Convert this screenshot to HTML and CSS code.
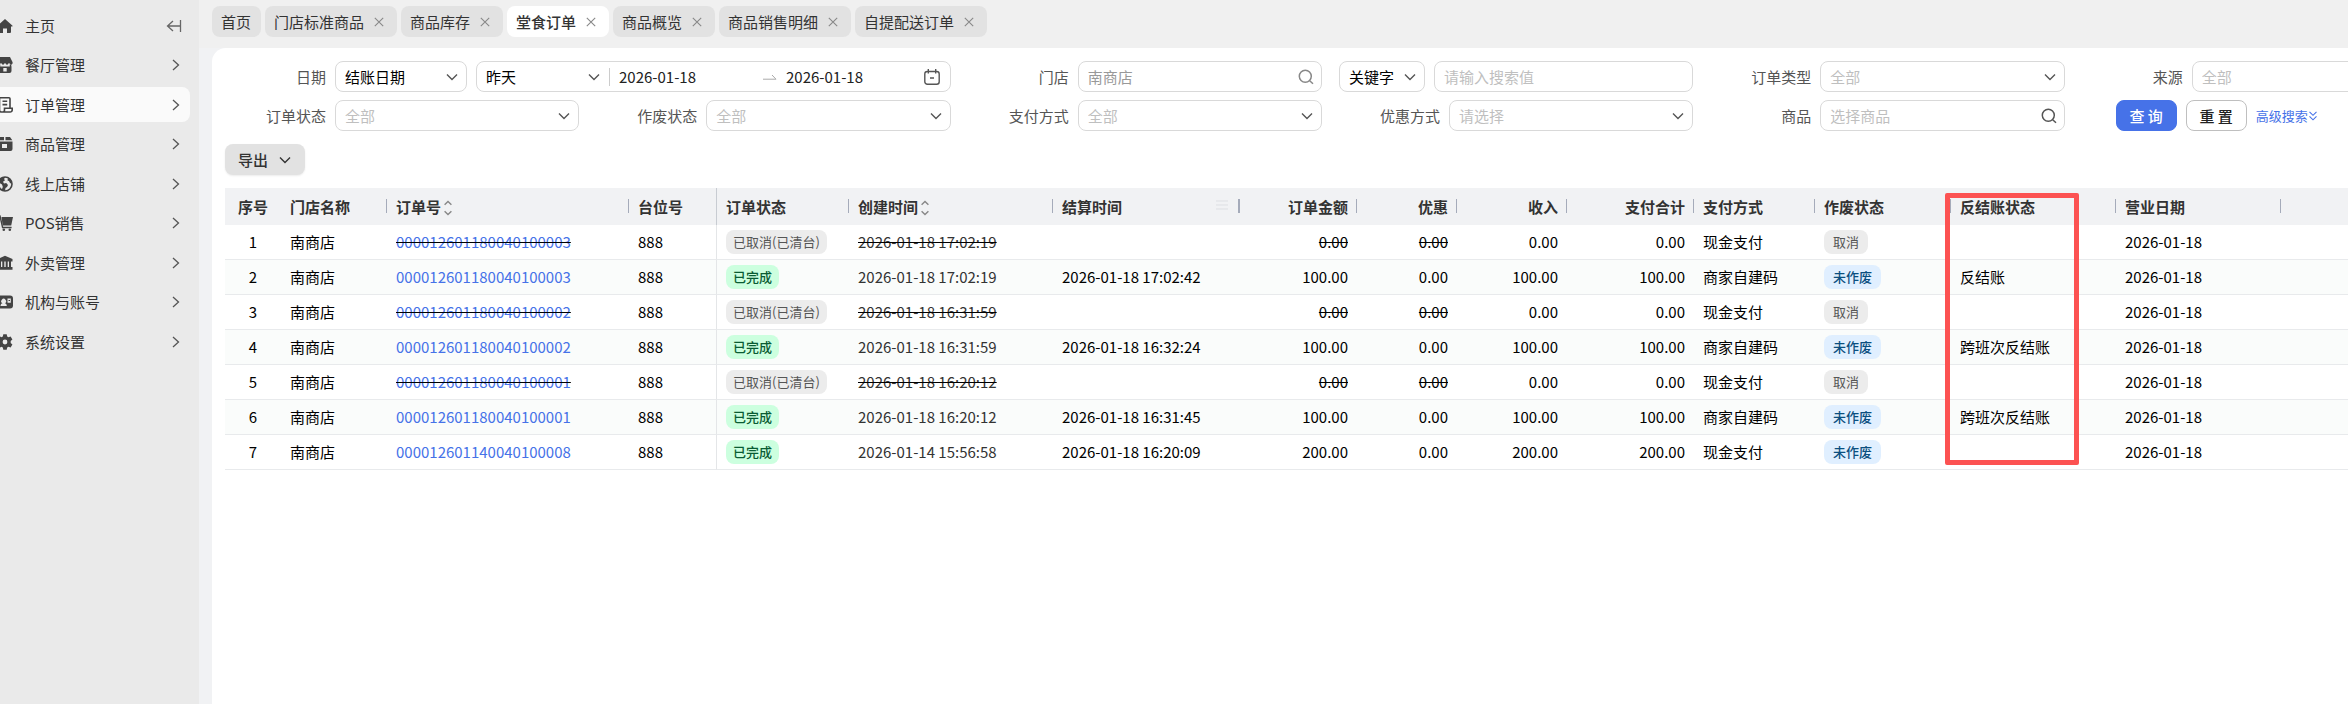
FILE: index.html
```html
<!DOCTYPE html>
<html lang="zh-CN">
<head>
    <meta charset="UTF-8">
    <meta name="viewport" content="width=device-width, initial-scale=1.0">
    <title>堂食订单</title>
    <link rel="stylesheet" href="styles.css">
</head>
<body>
    <!-- Icon sprite -->
    <svg class="sprite" aria-hidden="true">
        <symbol id="i-right" viewBox="0 0 12 12"><path d="M3 1l5.500 5L3 11" fill="none" stroke="currentColor" stroke-width="1.300"/></symbol>
        <symbol id="i-down" viewBox="0 0 12 12"><path d="M1 3.500l5 5 5-5" fill="none" stroke="currentColor" stroke-width="1.400"/></symbol>
        <symbol id="i-close" viewBox="0 0 10 10"><path d="M.8.8l8.400 8.400M9.200.8L.8 9.200" fill="none" stroke="currentColor" stroke-width="1.100"/></symbol>
        <symbol id="i-search" viewBox="0 0 16 16"><circle cx="7.300" cy="7.300" r="6" fill="none" stroke="currentColor" stroke-width="1.500"/><path d="M11.700 11.700l3.300 3" fill="none" stroke="currentColor" stroke-width="1.500"/></symbol>
        <symbol id="i-sort" viewBox="0 0 8 16"><path d="M.6 4.800L4 1.400l3.400 3.400M.6 11.200L4 14.600l3.400-3.400" fill="none" stroke="currentColor" stroke-width="1.400"/></symbol>
    </svg>

    <div class="layout">
        <aside class="sidebar">
            <nav class="menu">
                <a href="#" class="menu-item">
                    <svg class="menu-icon" viewBox="0 0 16 16"><path d="M8 1L15.300 7.400c.5.5.2 1.100-.4 1.100H14V14a1 1 0 0 1-1 1h-3v-4.500H6V15H3a1 1 0 0 1-1-1V8.500H1.100c-.6 0-.9-.6-.4-1.100z" fill="currentColor"/></svg>
                    <span>主页</span>
                    <svg class="collapse" viewBox="0 0 16 16"><path d="M7 3L1.500 8 7 13M1.500 8H14M14.500 2v12" fill="none" stroke="currentColor" stroke-width="1.300"/></svg>
                </a>
                <a href="#" class="menu-item">
                    <svg class="menu-icon" viewBox="0 0 16 16"><path d="M3 0h10l2.600 5.200v1.300L14 8l-2-2-2 2-2-2-2 2-2-2-2 2L.4 6.500V5.200z" fill="currentColor"/><path d="M1.500 9.500h13V14a2 2 0 0 1-2 2h-9a2 2 0 0 1-2-2zM6.300 11v3.500h3.400V11z" fill="currentColor" fill-rule="evenodd"/><path d="M2.500 7.500V10M13.500 7.500V10" stroke="currentColor" stroke-width="1.500"/></svg>
                    <span>餐厅管理</span>
                    <svg class="arrow"><use href="#i-right"/></svg>
                </a>
                <a href="#" class="menu-item active">
                    <svg class="menu-icon" viewBox="0 0 16 16"><path d="M13 11V1.800a1 1 0 0 0-1-1H2.500V13a2 2 0 0 0 2 2H13a2 2 0 0 0 2.200-2v-1.800H7.500V13c0 1-.7 2-1.700 2M5.500 4.300h4.700M5.500 7.600h4.700" fill="none" stroke="currentColor" stroke-width="1.600"/></svg>
                    <span>订单管理</span>
                    <svg class="arrow"><use href="#i-right"/></svg>
                </a>
                <a href="#" class="menu-item">
                    <svg class="menu-icon" viewBox="0 0 16 16"><path d="M3 1h4v3.300H1zM8.500 1H13l2.300 3.300H8.500zM.5 5.500h15V13a2 2 0 0 1-2 2h-11a2 2 0 0 1-2-2zM5 8v4h5V8z" fill="currentColor" fill-rule="evenodd"/></svg>
                    <span>商品管理</span>
                    <svg class="arrow"><use href="#i-right"/></svg>
                </a>
                <a href="#" class="menu-item">
                    <svg class="menu-icon" viewBox="0 0 16 16"><circle cx="8" cy="8" r="7" fill="none" stroke="currentColor" stroke-width="1.600"/><path d="M1 6C2 2.500 5 .8 8.500 1L7 3l1 1.200-2 1.600 1 1.700 2.200-.5L11 9l-1 2-1.500 1-.5 3C3.500 15 .5 11 1 6zM11 1.500c2.500 1.200 4 3.500 4 6.500L13 7l-1-2-1.500-.5z" fill="currentColor"/><path d="M2.500 7l2.500 1.600.8 2.400-.8 2C3 11.800 2 9.500 2.500 7z" fill="#eaeaea"/></svg>
                    <span>线上店铺</span>
                    <svg class="arrow"><use href="#i-right"/></svg>
                </a>
                <a href="#" class="menu-item">
                    <svg class="menu-icon" viewBox="0 0 16 16"><path d="M4.500 2H16l-1.800 8.500H5.700z" fill="currentColor"/><path d="M0 1h3l2.600 11.500h9" fill="none" stroke="currentColor" stroke-width="1.400"/><circle cx="6.800" cy="14.700" r="1.300" fill="currentColor"/><circle cx="12.800" cy="14.700" r="1.300" fill="currentColor"/></svg>
                    <span>POS销售</span>
                    <svg class="arrow"><use href="#i-right"/></svg>
                </a>
                <a href="#" class="menu-item">
                    <svg class="menu-icon" viewBox="0 0 16 16"><path d="M8 .8L15.500 4v2.500H.5V4zM2 6.500h2v5.500H2zM5.300 6.500h2v5.500h-2zM8.700 6.500h2v5.500h-2zM12 6.500h2v5.500h-2zM.5 12h15v2.800H.5z" fill="currentColor"/></svg>
                    <span>外卖管理</span>
                    <svg class="arrow"><use href="#i-right"/></svg>
                </a>
                <a href="#" class="menu-item">
                    <svg class="menu-icon" viewBox="0 0 16 16"><rect x="0" y="1.500" width="16" height="13" rx="3" fill="currentColor"/><path d="M3.500 12c0-1.600.9-2.400 2-2.700a2.400 2.400 0 1 1 2.300 0c1.200.3 2 1.100 2 2.700zM10.500 4.500h3.300v4.300h-3.300z" fill="#eaeaea"/><path d="M11.500 6.500h1.500" stroke="currentColor"/></svg>
                    <span>机构与账号</span>
                    <svg class="arrow"><use href="#i-right"/></svg>
                </a>
                <a href="#" class="menu-item">
                    <svg class="menu-icon" viewBox="0 0 16 16"><path d="M6.300.3h3.400l.5 2.200 1.200.7 2.200-.8 1.800 3-1.700 1.500v2.200l1.700 1.500-1.800 3-2.200-.8-1.200.7-.5 2.200H6.300l-.5-2.200-1.200-.7-2.200.8-1.800-3 1.700-1.500V6.900L.6 5.400l1.800-3 2.200.8 1.200-.7zM8 5.600a2.400 2.400 0 1 0 0 4.800 2.400 2.400 0 0 0 0-4.800z" fill="currentColor" fill-rule="evenodd"/></svg>
                    <span>系统设置</span>
                    <svg class="arrow"><use href="#i-right"/></svg>
                </a>
            </nav>
        </aside>

        <main class="main">
            <div class="tabs">
                <div class="tab"><a href="#">首页</a></div>
                <div class="tab"><a href="#">门店标准商品</a><button class="close" aria-label="关闭"><svg><use href="#i-close"/></svg></button></div>
                <div class="tab"><a href="#">商品库存</a><button class="close" aria-label="关闭"><svg><use href="#i-close"/></svg></button></div>
                <div class="tab active"><a href="#">堂食订单</a><button class="close" aria-label="关闭"><svg><use href="#i-close"/></svg></button></div>
                <div class="tab"><a href="#">商品概览</a><button class="close" aria-label="关闭"><svg><use href="#i-close"/></svg></button></div>
                <div class="tab"><a href="#">商品销售明细</a><button class="close" aria-label="关闭"><svg><use href="#i-close"/></svg></button></div>
                <div class="tab"><a href="#">自提配送订单</a><button class="close" aria-label="关闭"><svg><use href="#i-close"/></svg></button></div>
            </div>

            <section class="panel">
                <form class="filters">
                    <div class="field field-wide">
                        <label for="dateType">日期</label>
                        <div class="control date-type">
                            <select id="dateType"><option>结账日期</option></select>
                            <svg class="icon-down"><use href="#i-down"/></svg>
                        </div>
                        <div class="control date-range">
                            <div class="preset">
                                <select aria-label="日期范围"><option>昨天</option></select>
                                <svg class="icon-down"><use href="#i-down"/></svg>
                            </div>
                            <input type="text" class="start" value="2026-01-18" aria-label="开始日期">
                            <svg class="range-arrow" viewBox="0 0 14 6"><path d="M0 5.200h13L9 1" fill="none" stroke="currentColor"/></svg>
                            <input type="text" value="2026-01-18" aria-label="结束日期">
                            <svg class="calendar" viewBox="0 0 16 16"><rect x=".8" y="2.500" width="14.400" height="12.700" rx="2.500" fill="none" stroke="currentColor" stroke-width="1.400"/><path d="M4.300 0v4.500M11.700 0v4.500M6 9h4" stroke="currentColor" stroke-width="1.400"/></svg>
                        </div>
                    </div>
                    <div class="field">
                        <label for="store">门店</label>
                        <div class="control">
                            <input type="text" id="store" class="dim" value="南商店">
                            <svg class="icon-search light"><use href="#i-search"/></svg>
                        </div>
                    </div>
                    <div class="field field-keyword">
                        <div class="control keyword-type">
                            <select aria-label="搜索类型"><option>关键字</option></select>
                            <svg class="icon-down"><use href="#i-down"/></svg>
                        </div>
                        <div class="control">
                            <input type="text" placeholder="请输入搜索值" aria-label="搜索值">
                        </div>
                    </div>
                    <div class="field">
                        <label for="orderType">订单类型</label>
                        <div class="control">
                            <select id="orderType" class="empty"><option>全部</option></select>
                            <svg class="icon-down"><use href="#i-down"/></svg>
                        </div>
                    </div>
                    <div class="field">
                        <label for="source">来源</label>
                        <div class="control">
                            <select id="source" class="empty"><option>全部</option></select>
                            <svg class="icon-down"><use href="#i-down"/></svg>
                        </div>
                    </div>
                    <div class="field">
                        <label for="orderStatus">订单状态</label>
                        <div class="control">
                            <select id="orderStatus" class="empty"><option>全部</option></select>
                            <svg class="icon-down"><use href="#i-down"/></svg>
                        </div>
                    </div>
                    <div class="field">
                        <label for="voidStatus">作废状态</label>
                        <div class="control">
                            <select id="voidStatus" class="empty"><option>全部</option></select>
                            <svg class="icon-down"><use href="#i-down"/></svg>
                        </div>
                    </div>
                    <div class="field">
                        <label for="payMethod">支付方式</label>
                        <div class="control">
                            <select id="payMethod" class="empty"><option>全部</option></select>
                            <svg class="icon-down"><use href="#i-down"/></svg>
                        </div>
                    </div>
                    <div class="field">
                        <label for="discount">优惠方式</label>
                        <div class="control">
                            <select id="discount" class="empty"><option>请选择</option></select>
                            <svg class="icon-down"><use href="#i-down"/></svg>
                        </div>
                    </div>
                    <div class="field">
                        <label for="product">商品</label>
                        <div class="control">
                            <input type="text" id="product" placeholder="选择商品">
                            <svg class="icon-search"><use href="#i-search"/></svg>
                        </div>
                    </div>
                    <div class="actions">
                        <button type="button" class="btn btn-primary">查 询</button>
                        <button type="button" class="btn">重 置</button>
                        <a href="#" class="advanced">高级搜索<svg viewBox="0 0 8 10"><path d="M.5.800L4 4.300 7.500.800M.5 5.300L4 8.800l3.500-3.500" fill="none" stroke="currentColor" stroke-width="1.100"/></svg></a>
                    </div>
                </form>

                <button class="export">导出<svg><use href="#i-down"/></svg></button>

                <table class="orders">
                    <colgroup>
                        <col class="w-index"><col class="w-store"><col class="w-order"><col class="w-seat"><col class="w-status"><col class="w-created"><col class="w-settled"><col class="w-amount"><col class="w-discount"><col class="w-income"><col class="w-total"><col class="w-pay"><col class="w-void"><col class="w-reverse"><col class="w-day"><col>
                    </colgroup>
                    <thead>
                        <tr>
                            <th class="center">序号</th>
                            <th class="sep">门店名称</th>
                            <th class="sep">订单号<svg class="sort"><use href="#i-sort"/></svg></th>
                            <th class="frozen">台位号</th>
                            <th class="sep">订单状态</th>
                            <th class="sep">创建时间<svg class="sort"><use href="#i-sort"/></svg></th>
                            <th class="sep hover">结算时间<svg class="col-menu" viewBox="0 0 12 10"><path d="M0 1h12M0 5h12M0 9h12" stroke="currentColor"/></svg></th>
                            <th class="sep num">订单金额</th>
                            <th class="sep num">优惠</th>
                            <th class="sep num">收入</th>
                            <th class="sep num">支付合计</th>
                            <th class="sep">支付方式</th>
                            <th class="sep">作废状态</th>
                            <th class="sep marked">反结账状态<span class="mark"></span></th>
                            <th class="sep">营业日期</th>
                            <th></th>
                        </tr>
                    </thead>
                    <tbody>
                        <tr>
                            <td class="center">1</td><td>南商店</td><td class="strike"><a href="#">000012601180040100003</a></td><td class="frozen">888</td>
                            <td><span class="badge badge-gray">已取消(已清台)</span></td><td class="strike"><span class="time">2026-01-18 17:02:19</span></td><td></td>
                            <td class="num strike">0.00</td><td class="num strike">0.00</td><td class="num">0.00</td><td class="num">0.00</td>
                            <td>现金支付</td><td><span class="badge tag badge-gray">取消</span></td><td></td><td>2026-01-18</td><td></td>
                        </tr>
                        <tr>
                            <td class="center">2</td><td>南商店</td><td><a href="#">000012601180040100003</a></td><td class="frozen">888</td>
                            <td><span class="badge badge-green">已完成</span></td><td><span class="time">2026-01-18 17:02:19</span></td><td>2026-01-18 17:02:42</td>
                            <td class="num">100.00</td><td class="num">0.00</td><td class="num">100.00</td><td class="num">100.00</td>
                            <td>商家自建码</td><td><span class="badge tag badge-blue">未作废</span></td><td>反结账</td><td>2026-01-18</td><td></td>
                        </tr>
                        <tr>
                            <td class="center">3</td><td>南商店</td><td class="strike"><a href="#">000012601180040100002</a></td><td class="frozen">888</td>
                            <td><span class="badge badge-gray">已取消(已清台)</span></td><td class="strike"><span class="time">2026-01-18 16:31:59</span></td><td></td>
                            <td class="num strike">0.00</td><td class="num strike">0.00</td><td class="num">0.00</td><td class="num">0.00</td>
                            <td>现金支付</td><td><span class="badge tag badge-gray">取消</span></td><td></td><td>2026-01-18</td><td></td>
                        </tr>
                        <tr>
                            <td class="center">4</td><td>南商店</td><td><a href="#">000012601180040100002</a></td><td class="frozen">888</td>
                            <td><span class="badge badge-green">已完成</span></td><td><span class="time">2026-01-18 16:31:59</span></td><td>2026-01-18 16:32:24</td>
                            <td class="num">100.00</td><td class="num">0.00</td><td class="num">100.00</td><td class="num">100.00</td>
                            <td>商家自建码</td><td><span class="badge tag badge-blue">未作废</span></td><td>跨班次反结账</td><td>2026-01-18</td><td></td>
                        </tr>
                        <tr>
                            <td class="center">5</td><td>南商店</td><td class="strike"><a href="#">000012601180040100001</a></td><td class="frozen">888</td>
                            <td><span class="badge badge-gray">已取消(已清台)</span></td><td class="strike"><span class="time">2026-01-18 16:20:12</span></td><td></td>
                            <td class="num strike">0.00</td><td class="num strike">0.00</td><td class="num">0.00</td><td class="num">0.00</td>
                            <td>现金支付</td><td><span class="badge tag badge-gray">取消</span></td><td></td><td>2026-01-18</td><td></td>
                        </tr>
                        <tr>
                            <td class="center">6</td><td>南商店</td><td><a href="#">000012601180040100001</a></td><td class="frozen">888</td>
                            <td><span class="badge badge-green">已完成</span></td><td><span class="time">2026-01-18 16:20:12</span></td><td>2026-01-18 16:31:45</td>
                            <td class="num">100.00</td><td class="num">0.00</td><td class="num">100.00</td><td class="num">100.00</td>
                            <td>商家自建码</td><td><span class="badge tag badge-blue">未作废</span></td><td>跨班次反结账</td><td>2026-01-18</td><td></td>
                        </tr>
                        <tr>
                            <td class="center">7</td><td>南商店</td><td><a href="#">000012601140040100008</a></td><td class="frozen">888</td>
                            <td><span class="badge badge-green">已完成</span></td><td><span class="time">2026-01-14 15:56:58</span></td><td>2026-01-18 16:20:09</td>
                            <td class="num">200.00</td><td class="num">0.00</td><td class="num">200.00</td><td class="num">200.00</td>
                            <td>现金支付</td><td><span class="badge tag badge-blue">未作废</span></td><td></td><td>2026-01-18</td><td></td>
                        </tr>
                    </tbody>
                </table>
            </section>
        </main>
    </div>
</body>
</html>
```

FILE: styles.css
```css
/* Reset and Base Styles */
* {
    margin: 0;
    padding: 0;
    box-sizing: border-box;
}

body {
    font-family: "Noto Sans CJK SC", "Noto Sans", sans-serif;
    font-size: 15px;
    line-height: 22px;
    color: #000;
    background: #f1f2f4;
    overflow: hidden;
}

a {
    color: inherit;
    text-decoration: none;
}

button,
input,
select {
    font: inherit;
    color: inherit;
    border: none;
    background: none;
    outline: none;
}

button {
    cursor: pointer;
}

.sprite {
    display: none;
}

.layout {
    display: flex;
    min-height: 100vh;
}

/* Sidebar */
.sidebar {
    flex: 0 0 199px;
    padding-top: 8px;
    background: #eaeaea;
}

.menu {
    display: flex;
    flex-direction: column;
    justify-content: space-between;
    height: 351px;
}

.menu-item {
    display: flex;
    align-items: center;
    height: 35px;
    margin-right: 9px;
    padding-right: 8px;
    border-radius: 0 8px 8px 0;
    color: #333;
}

.menu-item.active {
    background: #fafafa;
}

.menu-item span {
    flex: 1;
}

.menu-icon {
    width: 16px;
    height: 16px;
    margin-left: -3px;
    margin-right: 12px;
    color: #444;
}

.arrow {
    width: 12px;
    height: 12px;
    color: #555;
}

.collapse {
    width: 16px;
    height: 16px;
    color: #666;
}

/* Tabs */
.main {
    flex: 1;
    min-width: 0;
    display: flex;
    flex-direction: column;
}

.tabs {
    display: flex;
    gap: 4px;
    height: 48px;
    padding: 6px 13px 11px;
    background: #f0f0f0;
}

.tab {
    display: flex;
    align-items: center;
    gap: 10px;
    padding: 0 10px 0 9px;
    border-radius: 8px;
    background: #e2e2e2;
    color: #333;
}

.tab.active {
    background: #fff;
    font-weight: 500;
}

.close {
    display: flex;
    margin-right: 3px;
    color: #888;
}

.close svg {
    width: 10px;
    height: 10px;
}

/* Panel */
.panel {
    flex: 1;
    margin-left: 13px;
    padding: 13px 0 0 13px;
    border-radius: 14px 0 0 0;
    background: #fff;
    overflow: hidden;
}

.filters {
    display: grid;
    grid-template-columns: repeat(6, 1fr);
    gap: 8px 17px;
    width: calc(100% + 88px);
}

.field {
    display: flex;
    align-items: center;
    gap: 9px;
    height: 31px;
    min-width: 0;
}

.field-wide {
    grid-column: span 2;
}

.field label {
    flex: 0 0 101px;
    text-align: right;
    color: #555;
}

.control {
    position: relative;
    display: flex;
    align-items: center;
    flex: 1;
    min-width: 0;
    height: 31px;
    border: 1px solid #d9d9d9;
    border-radius: 8px;
}

.control select,
.control input {
    flex: 1;
    width: 100%;
    min-width: 0;
    height: 29px;
    padding: 0 9px;
    line-height: 22px;
    appearance: none;
}

.control .empty,
.control input::placeholder {
    color: #bfbfbf;
}

.control .dim {
    color: #999;
}

.icon-down,
.icon-search {
    position: absolute;
    right: 8px;
    width: 12px;
    height: 12px;
    color: #555;
    pointer-events: none;
}

.icon-search {
    right: 7px;
    width: 16px;
    height: 16px;
}

.icon-search.light {
    color: #888;
}

.date-type {
    flex: 0 0 132px;
}

.date-range {
    color: #222;
}

.preset {
    position: relative;
    display: flex;
    align-items: center;
    flex: 0 0 133px;
    color: #000;
}

.preset::after {
    content: "";
    width: 1px;
    height: 18px;
    background: #ccc;
}

.preset .icon-down {
    right: 10px;
}

.date-range .start {
    flex: 0 0 153px;
}

.range-arrow {
    width: 14px;
    height: 6px;
    color: #aaa;
}

.calendar {
    width: 16px;
    height: 16px;
    margin-right: 10px;
    color: #555;
}

.keyword-type {
    flex: 0 0 86px;
}

.actions {
    display: flex;
    align-items: center;
    gap: 9px;
    padding-left: 34px;
}

.btn {
    width: 61px;
    height: 31px;
    border: 1px solid #bfbfbf;
    border-radius: 8px;
    font-weight: 500;
    color: #222;
}

.btn-primary {
    border-color: #4672e8;
    background: #4672e8;
    color: #fff;
}

.advanced {
    display: flex;
    align-items: center;
    gap: 1px;
    font-size: 13px;
    color: #4672e8;
}

.advanced svg {
    width: 8px;
    height: 10px;
}

.export {
    display: flex;
    align-items: center;
    gap: 11px;
    height: 31px;
    margin: 13px 0;
    padding: 0 14px 0 13px;
    border-radius: 8px;
    background: #e2e2e2;
    box-shadow: 0 1px 2px rgba(0, 0, 0, 0.08);
    font-weight: 500;
    color: #333;
}

.export svg {
    width: 12px;
    height: 12px;
}

/* Orders Table */
.orders {
    width: 100%;
    table-layout: fixed;
    border-collapse: separate;
    border-spacing: 0;
}

.w-index { width: 56px; }
.w-store { width: 106px; }
.w-order { width: 242px; }
.w-seat { width: 88px; }
.w-status { width: 132px; }
.w-created { width: 204px; }
.w-settled { width: 187px; }
.w-amount { width: 117px; }
.w-discount { width: 100px; }
.w-income { width: 110px; }
.w-total { width: 127px; }
.w-pay { width: 121px; }
.w-void { width: 136px; }
.w-reverse { width: 165px; }
.w-day { width: 165px; }

.orders th,
.orders td {
    padding: 0 9px;
    text-align: left;
    white-space: nowrap;
}

.orders th {
    position: relative;
    height: 37px;
    background: #f1f2f4;
    font-weight: 700;
    color: #333;
}

.orders td {
    height: 35px;
    border-bottom: 1px solid #e8eaec;
}

.orders tbody tr:nth-child(even) {
    background: #fafcfb;
}

.orders .center {
    text-align: center;
}

.orders .num {
    text-align: right;
}

.orders .frozen {
    border-right: 1px solid #e4e6e8;
}

.orders th.frozen {
    border-right-color: #c8ccd2;
}

.sep::after {
    content: "";
    position: absolute;
    top: 11px;
    right: 0;
    width: 1px;
    height: 14px;
    background: #a5abba;
}

.sep.hover::after {
    width: 2px;
}

.sort {
    width: 8px;
    height: 16px;
    margin-left: 3px;
    vertical-align: -3px;
    color: #888;
}

.col-menu {
    position: absolute;
    top: 12px;
    right: 12px;
    width: 12px;
    height: 10px;
    color: #dddfe3;
}

.orders td a {
    color: #4672e8;
}

.strike {
    text-decoration: line-through;
}

.time {
    color: #333;
}

.badge {
    display: inline-block;
    height: 24px;
    padding: 0 7px;
    border-radius: 8px;
    font-size: 13px;
    line-height: 24px;
    vertical-align: middle;
}

.tag {
    padding: 0 9px;
}

.badge-gray {
    background: #ececec;
    color: #555;
}

.badge-green {
    background: #ccffdf;
    color: #0a5c33;
    font-weight: 500;
}

.badge-blue {
    background: #e0efff;
    color: #0b4f80;
    font-weight: 500;
}

/* Highlight frame over the whole column */
.mark {
    position: absolute;
    top: 5px;
    left: -6px;
    z-index: 1;
    width: 134px;
    height: 272px;
    border: 5px solid #fc5252;
    border-radius: 2px;
    pointer-events: none;
}
```
